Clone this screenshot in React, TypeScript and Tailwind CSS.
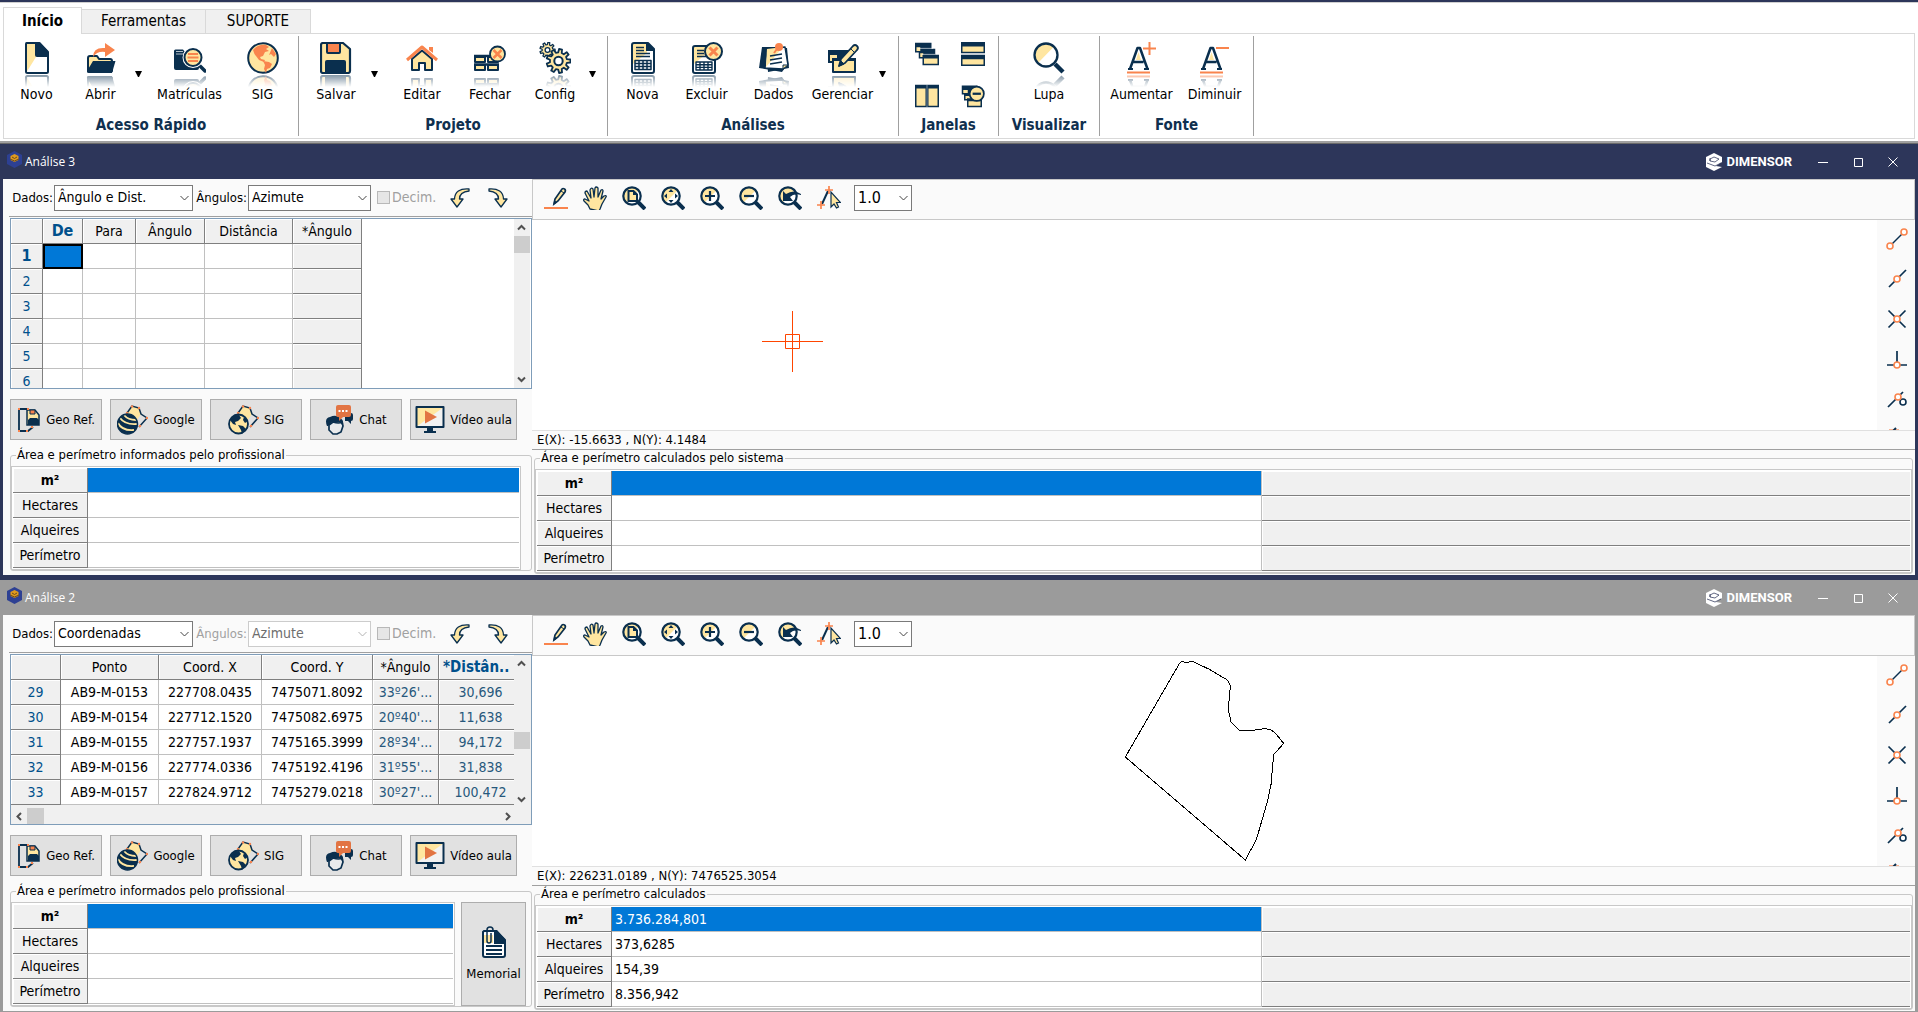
import type { ReactNode } from "react";

const N = "#0a2f4e";
const C = "#ffe6a0";
const O = "#f9844d";

/* Outline of a cog wheel with the given number of teeth. */
function cog(cx: number, cy: number, outer: number, inner: number, teeth: number) {
  const pts: string[] = [];
  const step = (2 * Math.PI) / teeth;
  for (let i = 0; i < teeth; i++) {
    const a = i * step;
    const corners: [number, number][] = [
      [inner, -0.3],
      [outer, -0.18],
      [outer, 0.18],
      [inner, 0.3],
    ];
    for (const [r, t] of corners) {
      pts.push(`${(cx + r * Math.cos(a + t * step)).toFixed(2)} ${(cy + r * Math.sin(a + t * step)).toFixed(2)}`);
    }
  }
  return `M${pts.join("L")}z`;
}

/* ---------- Ribbon icons (32 x 32) ---------- */

function Ico({ size = 32, children }: { size?: number; children: ReactNode }) {
  return (
    <svg
      viewBox="0 0 32 32"
      width={size}
      height={size}
      fill="none"
      strokeLinejoin="round"
      aria-hidden="true"
      className="block shrink-0"
    >
      {children}
    </svg>
  );
}

const icons = {
  novo: (
    <>
      <path d="M5 1h14l8 9v21H5z" fill="#fff" />
      <path d="M5 1h10v14L5 31z" fill={C} />
      <path d="M14 1h5l8 8v6H16q-2 0-2-2z" fill={N} />
      <path d="M5.500 1h13L27 10v19.500q0 1.500-1.500 1.500h-19Q5 31 5 29.500V2q0-1 .5-1z" stroke={N} strokeWidth="2" />
    </>
  ),
  abrir: (
    <>
      <path d="M3 29V16q0-2 2-2h7l2 3h11q2 0 2 2v10z" fill={C} stroke={N} strokeWidth="2" />
      <path d="M8 19h22.500L27 31H3.500q-2 0-1.500-2z" fill={N} />
      <path d="M8 15q0-10 12-9V1l10 7-10 7v-5q-8-1-12 5z" fill={O} />
    </>
  ),
  matriculas: (
    <>
      <path d="M0 26V9q0-1.500 1.500-1.500H9L11 10h14v16q0 2-2 2H2q-2 0-2-2z" fill={N} />
      <path d="M2 9.500h7M2 12h9" stroke="#fff" strokeWidth=".7" />
      <path d="m24 22 7 7" stroke={N} strokeWidth="3.500" strokeLinecap="round" />
      <circle cx="19" cy="15.500" r="8.500" fill={C} stroke="#fff" strokeWidth="4" />
      <circle cx="19" cy="15.500" r="8.500" fill={C} stroke={N} strokeWidth="2" />
      <path d="M14 12h10M13.500 15.500h11M14 19h10" stroke={O} strokeWidth="2" />
    </>
  ),
  globo: (
    <>
      <circle cx="16" cy="16" r="14.800" fill={C} stroke={N} strokeWidth="2" />
      <path d="M6 8q5-6 13-5l3 2-3 2 3 2-4 1-2 4-3 1 1 2 4 1-1 2-5-2-3-4Q7 12 6 8z" fill={O} />
      <path d="m16 19 6 1 3 2-2 4-3 1-1 4-2-4 1-4z" fill={O} />
      <path d="m25 6 4 6-2 3-3-3-2 1z" fill={O} />
    </>
  ),
  salvar: (
    <>
      <path d="M3 1h20l7 6v22q0 2-2 2H3q-2 0-2-2V3q0-2 2-2z" fill={C} stroke={N} strokeWidth="2.200" />
      <path d="M7 1h13v9q0 1-1 1H8q-1 0-1-1z" fill={O} stroke={N} strokeWidth="2" />
      <path d="M5 31V20q0-2 2-2h17q2 0 2 2v11z" fill={N} />
    </>
  ),
  editar: (
    <>
      <path d="M23 5h4v6l-4-3z" fill={O} />
      <path d="M6 17v11h7v-7h6v7h7V17L16 8.500z" fill={C} stroke={N} strokeWidth="2" />
      <path d="M1 18 16 5l15 13" stroke={O} strokeWidth="3" />
    </>
  ),
  fechar: (
    <>
      <g fill={C} stroke={N} strokeWidth="2">
        <path d="M1 15h10v5H1zM1 23h10v5H1zM14 15h10v5H14zM14 23h10v5H14z" />
      </g>
      <path d="M0 14h25M0 22.500h25" stroke={N} strokeWidth="2.500" />
      <circle cx="23.500" cy="12" r="7.500" fill={C} stroke={N} strokeWidth="1.800" />
      <path d="m19.500 8 8 8m0-8-8 8" stroke={O} strokeWidth="2.500" />
    </>
  ),
  config: (
    <>
      <path d={cog(8.5, 8, 7.6, 5.4, 9)} fill={C} stroke={N} strokeWidth="1.300" />
      <circle cx="8.500" cy="8" r="2.400" fill="#fff" stroke={N} strokeWidth="1.300" />
      <path d={cog(19.500, 19, 12, 8.600, 9)} fill={C} stroke={N} strokeWidth="1.800" />
      <circle cx="19.500" cy="19" r="4.200" fill="#fff" stroke={N} strokeWidth="2" />
    </>
  ),
  nova: (
    <>
      <path d="M7 1h14l6 6v22q0 2-2 2H7q-2 0-2-2V3q0-2 2-2z" fill="#fff" />
      <path d="M6 1h14v10L6 22z" fill={C} />
      <path d="M19 1h2l6 6v2h-8z" fill={N} />
      <path d="M9 5.500h8M9 8.500h8M9 11.500h14M9 14.500h14M8 18.500h16v9H8zM8 21.500h16M8 24.500h16M12 18v10M16 18v10M20 18v10" stroke={N} strokeWidth="1.500" />
      <path d="M7 1h14l6 6v22q0 2-2 2H7q-2 0-2-2V3q0-2 2-2z" stroke={N} strokeWidth="2" />
    </>
  ),
  excluir: (
    <>
      <path d="M4 4h17l3 3v22q0 2-2 2H4q-2 0-2-2V6q0-2 2-2z" fill="#fff" />
      <path d="M3 4h12v8L3 22z" fill={C} />
      <path d="M6 8.500h7M6 11.500h7M6 14.500h9M5 20h16v8H5zM5 22.700h16M5 25.400h16M9 20v8M13 20v8M17 20v8" stroke={N} strokeWidth="1.400" />
      <path d="M4 4h17l3 3v22q0 2-2 2H4q-2 0-2-2V6q0-2 2-2z" stroke={N} strokeWidth="2" />
      <circle cx="22.500" cy="9.500" r="8.500" fill={C} stroke={N} strokeWidth="2" />
      <path d="m18.500 5.500 8 8m0-8-8 8" stroke={O} strokeWidth="3" />
    </>
  ),
  dados: (
    <>
      <path d="M4 5h20l5 18-5 7L1 26z" fill={N} />
      <path d="M8 6h21l2 20-21 4z" fill={N} />
      <path d="m9 7 18-2 3 18-5 4-18-1z" fill="#fff" stroke={N} strokeWidth="1.500" />
      <path d="m9 7 16-2L8 25z" fill={C} />
      <path d="M30 23h-5v4z" fill={C} stroke={N} />
      <path d="m12 14 12-2M12 18l12-2M12 22l12-2" stroke={N} strokeWidth="1.700" />
      <circle cx="21" cy="5" r="4" fill={O} />
      <path d="m19 7-3 4" stroke={O} strokeWidth="2" />
    </>
  ),
  gerenciar: (
    <>
      <path d="M1 8h20v13H1z" fill={N} />
      <path d="M3 13h7v6H3z" fill={C} />
      <path d="M6 17h22v13H6z" fill={C} stroke={N} strokeWidth="2" />
      <path d="M5 16h24v3H5z" fill={N} />
      <path d="m12 24 2-7L26 4q2-2 4 0t0 4L18 21z" fill={C} stroke={N} strokeWidth="1.800" />
      <path d="m12 24 2-5 3 3zM24 7l4 4" fill={N} stroke={N} />
    </>
  ),
  lupa: (
    <>
      <path d="m22 22 8 8" stroke={N} strokeWidth="4.500" />
      <circle cx="13" cy="13" r="11.500" fill="#fff" />
      <path d="M21 4.500A11.500 11.500 0 1 0 5 21z" fill={C} />
      <circle cx="13" cy="13" r="11.500" stroke={N} strokeWidth="2.300" />
    </>
  ),
  aumentar: (
    <>
      <path d="m12.500 10 2.500 8h-5z" fill={C} />
      <path d="m4 27 7.500-21h2.500l7.500 21M7.500 20h10" stroke={N} strokeWidth="2.500" />
      <path d="M2 27h5M18 27h5" stroke={N} strokeWidth="2" />
      <path d="M1 30.500h23M17 6.500h13M23.500 0v13" stroke={O} strokeWidth="2" />
    </>
  ),
  diminuir: (
    <>
      <path d="m12.500 10 2.500 8h-5z" fill={C} />
      <path d="m4 27 7.500-21h2.500l7.500 21M7.500 20h10" stroke={N} strokeWidth="2.500" />
      <path d="M2 27h5M18 27h5" stroke={N} strokeWidth="2" />
      <path d="M1 30.500h23M17 6h13" stroke={O} strokeWidth="2" />
    </>
  ),
  cascata: (
    <>
      <path d="M0 1h22v13H0zM5 9h22v13H5z" fill={N} />
      <path d="M2 7h5v5H2zM7 15h4v5H7z" fill={C} />
      <path d="M10 17h22v14H10z" fill={N} />
      <path d="M12 22h18v7H12z" fill={C} />
      <path d="M4 8.500h20M9 16.500h18" stroke="#fff" strokeWidth=".8" />
    </>
  ),
  horizontal: (
    <>
      <path d="M0 0h32v15H0zM0 17h32v15H0z" fill={N} />
      <path d="M2 6h28v7H2zM2 23h28v7H2z" fill={C} />
    </>
  ),
  vertical: (
    <>
      <path d="M0 1h32v30H0z" fill={N} />
      <path d="M2 6h12v23H2zM18 6h12v23H18z" fill={C} />
      <path d="M16 1v30" stroke="#fff" strokeWidth=".6" />
    </>
  ),
  fecharJanelas: (
    <>
      <path d="M1 2h21v12H1zM4 10h20v12H4z" fill={N} />
      <path d="M3 8h6v4H3zM6 16h7v4H6z" fill={C} />
      <path d="M8 19h20v12H8z" fill={N} />
      <path d="M10 23h16v6H10z" fill={C} />
      <circle cx="21" cy="13" r="9.500" fill={C} stroke={N} strokeWidth="2.300" />
      <path d="M15.500 13h11" stroke={N} strokeWidth="3" />
    </>
  ),
};

type IconName = keyof typeof icons;

function Reflected({ name }: { name: IconName }) {
  return (
    <span className="block">
      <Ico>{icons[name]}</Ico>
      <span className="mt-px block h-3 overflow-hidden opacity-50 [mask-image:linear-gradient(to_bottom,black,transparent)]">
        <span className="block -scale-y-100">
          <Ico>{icons[name]}</Ico>
        </span>
      </span>
    </span>
  );
}

function Tool({ name, label, width }: { name: IconName; label: string; width: string }) {
  return (
    <button type="button" className={`${width} flex flex-col items-center`}>
      <Reflected name={name} />
      <span className="-mt-px whitespace-nowrap text-[14px] leading-4 text-black">{label}</span>
    </button>
  );
}

function More({ label }: { label: string }) {
  return (
    <button type="button" aria-label={label} className="flex w-3 justify-center pt-[29px]">
      <svg width="7" height="6" viewBox="0 0 7 6" aria-hidden="true">
        <path d="M0 0h7L4 6H3z" fill="#000" />
      </svg>
    </button>
  );
}

function Group({ title, width, children }: { title: string; width: string; children: ReactNode }) {
  return (
    <section className={`${width} flex h-[100px] shrink-0 flex-col justify-between border-r border-[#a0a0a0] pt-[6px]`}>
      <div className="flex justify-center">{children}</div>
      <h2 className="pb-[2px] text-center text-[15px] font-bold leading-[18px] text-[#10304f]">{title}</h2>
    </section>
  );
}

function Ribbon() {
  return (
    <header className="bg-white">
      <div className="h-[2px] bg-[#2d365a]" />
      <nav className="flex items-end border-t border-[#d0d0d0] pl-[3px] pt-[4px]">
        <button type="button" className="-mb-px h-[27px] w-[79px] border border-b-0 border-[#d9d9d9] bg-white text-[15px] font-bold leading-6 text-black">
          Início
        </button>
        <button type="button" className="h-6 w-[123px] border-t border-[#d9d9d9] bg-[#f0f0f0] text-[15px] text-black">
          Ferramentas
        </button>
        <button type="button" className="h-6 w-[106px] border border-b-0 border-[#d9d9d9] bg-[#f0f0f0] text-[15px] text-black">
          SUPORTE
        </button>
      </nav>
      <div className="mx-[3px] flex border border-[#d9d9d9] pb-[2px] pt-[2px]">
        <Group title="Acesso Rápido" width="w-[295px]">
          <Tool name="novo" label="Novo" width="w-16" />
          <Tool name="abrir" label="Abrir" width="w-16" />
          <More label="Mais opções de Abrir" />
          <Tool name="matriculas" label="Matrículas" width="w-[90px]" />
          <Tool name="globo" label="SIG" width="w-14" />
          <span className="w-[7px]" />
        </Group>
        <Group title="Projeto" width="w-[309px]">
          <Tool name="salvar" label="Salvar" width="w-16" />
          <More label="Mais opções de Salvar" />
          <span className="w-2" />
          <Tool name="editar" label="Editar" width="w-[68px]" />
          <Tool name="fechar" label="Fechar" width="w-[68px]" />
          <Tool name="config" label="Config" width="w-[62px]" />
          <More label="Mais opções de Config" />
          <span className="w-1" />
        </Group>
        <Group title="Análises" width="w-[291px]">
          <Tool name="nova" label="Nova" width="w-16" />
          <Tool name="excluir" label="Excluir" width="w-16" />
          <Tool name="dados" label="Dados" width="w-[70px]" />
          <Tool name="gerenciar" label="Gerenciar" width="w-[68px]" />
          <More label="Mais opções de Gerenciar" />
          <span className="w-[7px]" />
        </Group>
        <Group title="Janelas" width="w-[100px]">
          <div className="grid grid-cols-2 gap-x-[22px] gap-y-[18px] pl-[2px]">
            {(["cascata", "horizontal", "vertical", "fecharJanelas"] as IconName[]).map((n) => (
              <button key={n} type="button" aria-label={n}>
                <Ico size={24}>{icons[n]}</Ico>
              </button>
            ))}
          </div>
        </Group>
        <Group title="Visualizar" width="w-[101px]">
          <Tool name="lupa" label="Lupa" width="w-16" />
        </Group>
        <Group title="Fonte" width="w-[154px]">
          <Tool name="aumentar" label="Aumentar" width="w-[76px]" />
          <Tool name="diminuir" label="Diminuir" width="w-[70px]" />
        </Group>
      </div>
      <div className="mt-[2px] h-[3px] border-b border-[#696969] bg-[#a0a0a0]" />
    </header>
  );
}

/* ---------- Window pieces ---------- */

function Cube() {
  return (
    <svg width="15" height="17" viewBox="0 0 15 17" aria-hidden="true">
      <path d="M7.500 0 15 4v9l-7.500 4L0 13V4z" fill="#2d4093" />
      <path d="m7.500 3 4 2v4l-4 2-4-2V5z" fill="#e09a1c" />
      <path d="m3 8 4.500 2L12 8M5 6l2.500 1.500L10 6" stroke="#6b4a1e" fill="none" />
    </svg>
  );
}

function Brand() {
  return (
    <span className="flex items-center gap-[5px] font-['Roboto'] text-[13px] font-bold text-white">
      <svg width="16" height="18" viewBox="0 0 16 18" aria-hidden="true">
        <path d="m8 0 8 4v5l-6 4 6 1-8 4-8-4V4z" fill="currentColor" />
        <path d="m4 6 4-2 5 2-4 3-5-1zM1 10l8 3 6-3M4 5v3" fill="none" stroke="#2d365a" strokeOpacity=".75" />
      </svg>
      DIMENSOR
    </span>
  );
}

function TitleBar({ title }: { title: string }) {
  return (
    <div className="flex h-[35px] items-center pl-[7px] pr-[19px] text-white">
      <span className="-mt-1">
        <Cube />
      </span>
      <h1 className="ml-[3px] flex-1 font-['Open_Sans'] text-[12px] leading-4">{title}</h1>
      <Brand />
      <div className="ml-[25px] flex gap-[23px]">
        <button type="button" aria-label="Minimizar">
          <svg width="12" height="12" viewBox="0 0 12 12"><path d="M1 6.500h10" stroke="#fff" /></svg>
        </button>
        <button type="button" aria-label="Maximizar">
          <svg width="12" height="12" viewBox="0 0 12 12"><path d="M2.500 2.500h8v8h-8z" fill="none" stroke="#fff" /></svg>
        </button>
        <button type="button" aria-label="Fechar janela">
          <svg width="12" height="12" viewBox="0 0 12 12"><path d="m1.500 1.500 9 9m0-9-9 9" stroke="#fff" /></svg>
        </button>
      </div>
    </div>
  );
}

function Picker({ label, value, disabled = false, size }: { label?: string; value: string; disabled?: boolean; size: string }) {
  return (
    <>
      <select
        aria-label={label}
        disabled={disabled}
        defaultValue={value}
        className={`${size} h-[26px] w-full appearance-none border bg-white pl-[3px] opacity-100 ${disabled ? "border-[#cccccc] text-[#6d6d6d]" : "border-[#7a7a7a] text-black"}`}
      >
        <option>{value}</option>
      </select>
      <svg className={`pointer-events-none absolute right-1 top-[10px] ${disabled ? "opacity-40" : ""}`} width="9" height="7" viewBox="0 0 9 7" aria-hidden="true">
        <path d="M.5 1 4.500 5l4-4" fill="none" stroke="#444" />
      </svg>
    </>
  );
}

function Combo({ label, value, width, disabled = false }: { label: string; value: string; width: string; disabled?: boolean }) {
  return (
    <label className={`flex shrink-0 items-center text-[13px] ${disabled ? "text-[#a0a0a0]" : "text-black"}`}>
      <span className="whitespace-nowrap pr-px">{label}</span>
      <span className={`${width} relative block shrink-0`}>
        <Picker value={value} disabled={disabled} size="text-[14px]" />
      </span>
    </label>
  );
}

function CurvedArrow({ flip = false }: { flip?: boolean }) {
  return (
    <svg width="20" height="20" viewBox="0 0 20 20" className={flip ? "-scale-x-100" : ""} aria-hidden="true">
      <path d="M19 1Q5 0 4.500 11H1l6 8 6-8H9.500Q9.500 4 19 3z" fill={C} stroke={N} strokeWidth="1.300" strokeLinejoin="round" />
    </svg>
  );
}

function DataBar({ source, locked = false }: { source: string; locked?: boolean }) {
  return (
    <div className="ml-[6px] flex h-[38px] items-center border-b border-[#a0a0a0] pl-[3px]">
      <div className="flex w-[181px] justify-end">
        <Combo label="Dados:" value={source} width="w-[139px]" />
      </div>
      <div className="flex w-[178px] justify-end">
        <Combo label="Ângulos:" value="Azimute" width="w-[123px]" disabled={locked} />
      </div>
      <label className="ml-[6px] flex items-center gap-[2px] text-[14px] text-[#a0a0a0]">
        <input type="checkbox" disabled className="size-[13px] appearance-none border border-[#b8b8b8] bg-[#e6e6e6]" />
        Decim.
      </label>
      <button type="button" aria-label="Desfazer" className="ml-[14px]"><CurvedArrow /></button>
      <button type="button" aria-label="Refazer" className="ml-[18px]"><CurvedArrow flip /></button>
    </div>
  );
}

function Chevron({ d }: { d: string }) {
  return (
    <svg width="16" height="17" viewBox="0 0 16 17" fill="none" stroke="#505050" strokeWidth="2" className="block" aria-hidden="true">
      <path d={d} />
    </svg>
  );
}

function VScroll({ offset }: { offset: string }) {
  return (
    <div className="mr-px flex w-4 shrink-0 flex-col justify-between bg-[#f0f0f0]">
      <button type="button" aria-label="Rolar para cima"><Chevron d="m4 10.500 3.500-3.500 3.500 3.500" /></button>
      <div className="flex-1"><div className={`${offset} h-[17px] bg-[#cdcdcd]`} /></div>
      <button type="button" aria-label="Rolar para baixo"><Chevron d="m4 6.500 3.500 3.500L11 6.500" /></button>
    </div>
  );
}

const gray = "border-b border-r border-[#7f7f7f] bg-[#f0f0f0] shadow-[inset_1px_1px_0_#fff]";
const cell = "border-b border-r border-[#c0c0c0] bg-white";
const grid = "table-fixed border-separate border-spacing-0 text-center text-[14px] leading-5";

function AngleGrid() {
  return (
    <div className="flex min-h-[171px] flex-1 basis-0 border border-[#7f9db9] bg-white">
      <div className="min-h-0 flex-1 basis-0 overflow-hidden">
        <div className="h-[169px]">
          <table className={grid + " w-[351px] text-black"}>
            <colgroup>
              <col className="w-8" /><col className="w-10" /><col className="w-[53px]" />
              <col className="w-[69px]" /><col className="w-[88px]" /><col className="w-[69px]" />
            </colgroup>
            <thead>
              <tr className="h-[25px]">
                <th className={gray} />
                <th className={gray + " p-0 text-[16px] font-bold text-[#00508c]"}>De</th>
                {["Para", "Ângulo", "Distância", "*Ângulo"].map((h) => (
                  <th key={h} className={gray + " p-0 font-normal"}>{h}</th>
                ))}
              </tr>
            </thead>
            <tbody>
              {[1, 2, 3, 4, 5, 6].map((n) => (
                <tr key={n} className="h-[25px]">
                  <th className={gray + (n === 1 ? " text-[16px] font-bold" : " font-normal") + " p-0 text-[#00508c]"}>{n}</th>
                  <td className={n === 1 ? "border-2 border-black bg-[#0078d7]" : cell} />
                  <td className={cell} /><td className={cell} /><td className={cell} />
                  <td className={gray} />
                </tr>
              ))}
            </tbody>
          </table>
        </div>
      </div>
      <VScroll offset="" />
    </div>
  );
}

const points = [
  ["29", "AB9-M-0153", "227708.0435", "7475071.8092", "33º26'...", "30,696"],
  ["30", "AB9-M-0154", "227712.1520", "7475082.6975", "20º40'...", "11,638"],
  ["31", "AB9-M-0155", "227757.1937", "7475165.3999", "28º34'...", "94,172"],
  ["32", "AB9-M-0156", "227774.0336", "7475192.4196", "31º55'...", "31,838"],
  ["33", "AB9-M-0157", "227824.9712", "7475279.0218", "30º27'...", "100,472"],
];

function PointGrid() {
  return (
    <div className="flex min-h-[171px] flex-1 basis-0 flex-col border border-[#7f9db9] bg-[#f0f0f0]">
      <div className="flex min-h-0 flex-1 basis-0">
        <div className="flex-1 overflow-hidden">
          <table className={grid + " w-full whitespace-nowrap text-black"}>
            <colgroup>
              <col className="w-[50px]" /><col className="w-[98px]" /><col className="w-[103px]" />
              <col className="w-[111px]" /><col className="w-[66px]" /><col />
            </colgroup>
            <thead>
              <tr className="h-[25px]">
                <th className={gray} />
                {["Ponto", "Coord. X", "Coord. Y", "*Ângulo"].map((h) => (
                  <th key={h} className={gray + " p-0 font-normal"}>{h}</th>
                ))}
                <th className={gray + " overflow-hidden border-r-0 p-0 text-left text-[15px] font-bold text-[#00508c]"}>
                  <span className="pl-1">*Distân..</span>
                </th>
              </tr>
            </thead>
            <tbody>
              {points.map((p) => (
                <tr key={p[0]} className="h-[25px]">
                  <th className={gray + " p-0 font-normal text-[#00508c]"}>{p[0]}</th>
                  <td className={cell + " p-0"}>{p[1]}</td>
                  <td className={cell + " p-0"}>{p[2]}</td>
                  <td className={cell + " p-0"}>{p[3]}</td>
                  <td className={gray + " p-0 text-[#27587c]"}>{p[4]}</td>
                  <td className={gray + " border-r-0 p-0 pl-2 text-[#27587c]"}>{p[5]}</td>
                </tr>
              ))}
            </tbody>
          </table>
        </div>
        <VScroll offset="mt-[60px]" />
      </div>
      <div className="flex h-4 items-center pr-4">
        <button type="button" aria-label="Rolar para a esquerda"><Chevron d="M10 5 6.500 8.500 10 12" /></button>
        <div className="flex-1"><div className="h-4 w-[17px] bg-[#cdcdcd]" /></div>
        <button type="button" aria-label="Rolar para a direita"><Chevron d="M7 5l3.500 3.500L7 12" /></button>
      </div>
    </div>
  );
}

/* ---------- Action buttons ---------- */

const parcel = (
  <>
    <path d="M10 8 15 1l7 2 2 6-8 12-6-4z" fill={C} />
    <path d="M10 8 15 1l7 2 2 6 6 4-8 9" stroke={N} strokeWidth="1.500" />
    <g fill={O}>
      <circle cx="10" cy="8" r="1.200" /><circle cx="15" cy="1.500" r="1.200" /><circle cx="22" cy="3" r="1.200" />
      <circle cx="30" cy="13" r="1.200" /><circle cx="23" cy="21" r="1.200" />
    </g>
  </>
);

const actions: { label: string; width: string; icon: ReactNode }[] = [
  {
    label: "Geo Ref.",
    width: "w-[92px]",
    icon: (
      <svg width="24" height="26" viewBox="0 0 24 26" fill="none" aria-hidden="true">
        <path d="M11 2H2v22h9l5-4" stroke={N} strokeWidth="1.800" />
        <path d="M10 3h8l4 5v10H10z" fill={C} stroke={N} strokeWidth="1.500" />
        <path d="M11 18v-5l2-2h7l2 2v5z" fill={N} />
        <path d="M13 3h5v4h-5z" fill={O} stroke={N} />
        <path d="M1 1h2v2H1zM10 1h2v2h-2zM1 23h2v2H1zM9 23h2v2H9zM14 19h2v2h-2z" fill={O} />
      </svg>
    ),
  },
  {
    label: "Google",
    width: "w-[92px]",
    icon: (
      <svg width="31" height="30" viewBox="0 0 31 30" fill="none" aria-hidden="true">
        {parcel}
        <circle cx="10.500" cy="19" r="10" fill={N} />
        <path d="M3 13q5 7 17 6M1 18q4 8 16 7M7 10q4 5 12 5" stroke={C} strokeWidth="1.800" />
        <circle cx="10.500" cy="19" r="10" stroke={N} strokeWidth="1.500" />
      </svg>
    ),
  },
  {
    label: "SIG",
    width: "w-[92px]",
    icon: (
      <svg width="31" height="30" viewBox="0 0 31 30" fill="none" aria-hidden="true">
        {parcel}
        <circle cx="10.500" cy="19" r="9.500" fill={C} stroke={N} strokeWidth="1.800" />
        <path d="M2 15q3-5 9-5l2 3-3 3-3 1 1 3-3-1zM10 20l5 1 3 3-4 5-1-4zM16 12l4 4-3 2-2-3z" fill={N} />
      </svg>
    ),
  },
  {
    label: "Chat",
    width: "w-[92px]",
    icon: (
      <svg width="29" height="30" viewBox="0 0 29 30" fill="none" aria-hidden="true">
        <path d="M20 8h6q2 0 2 2v4q0 2-2 2v3l-3-3h-3z" fill={N} />
        <path d="m4 20 4-3q6 2 9 0l1 4-2 6-4 2H8l-4-4z" fill="#e8eaec" stroke={N} strokeWidth="1.700" />
        <path d="M2 21q-3-8 3-9 6-3 10 1 4 2 3 7h-1l-2-3q-4 1-8 0l-4 4z" fill={N} />
        <path d="M13 0h11q2 0 2 2v8q0 2-2 2h-6l-4 4v-4h-1q-2 0-2-2V2q0-2 2-2z" fill="#e27443" />
        <path d="M13.500 6h2M17 6h2M20.500 6h2" stroke="#fff" strokeWidth="2" />
      </svg>
    ),
  },
  {
    label: "Vídeo aula",
    width: "w-[107px]",
    icon: (
      <svg width="30" height="27" viewBox="0 0 30 27" fill="none" aria-hidden="true">
        <path d="M1 1h28v20H1z" fill="#f2f2f2" />
        <path d="M1 1h28L1 21z" fill={C} />
        <path d="M1.500 1h27v20h-27z" stroke={N} strokeWidth="2" strokeLinejoin="round" />
        <path d="M10 4.500v13L22 11z" fill="#e27443" />
        <path d="M12 22h6v3h3v2H9v-2h3z" fill={N} />
      </svg>
    ),
  },
];

function Actions() {
  return (
    <div className="flex gap-2 pb-[7px] pt-[10px]">
      {actions.map((a) => (
        <button key={a.label} type="button" className={`${a.width} flex h-[41px] items-center justify-center gap-[5px] whitespace-nowrap border border-[#adadad] bg-[#e1e1e1] text-[13px] text-black`}>
          {a.icon}
          {a.label}
        </button>
      ))}
    </div>
  );
}

/* ---------- Area tables ---------- */

function AreaTable({ values, split = false }: { values: string[]; split?: boolean }) {
  return (
    <div className="flex-1 border border-[#c8c8c8] bg-white p-[1px]">
      <table className="w-full table-fixed border-separate border-spacing-0 text-[14px] leading-5 text-black">
        <colgroup>
          <col className="w-[75px]" />
          <col className={split ? "w-[650px]" : ""} />
          {split && <col />}
        </colgroup>
        <tbody>
          {["m²", "Hectares", "Alqueires", "Perímetro"].map((h, i) => (
            <tr key={h} className="h-[25px]">
              <th className={gray + " p-0 " + (i === 0 ? "font-bold" : "font-normal")}>{h}</th>
              <td className={"border-b border-[#c0c0c0] p-0 pl-[3px] " + (split ? "border-r " : "") + (i === 0 ? "bg-[#0078d7] text-white" : "bg-white")}>
                {values[i]}
              </td>
              {split && <td className={gray + " border-r-0"} />}
            </tr>
          ))}
        </tbody>
      </table>
    </div>
  );
}

function AreaBox({ legend, children }: { legend: string; children: ReactNode }) {
  return (
    <fieldset className="min-w-0 rounded-[3px] border border-[#c8c8c8]">
      <legend className="ml-[5px] px-px text-[13px] leading-4 text-black">{legend}</legend>
      <div className="flex pt-[3px]">{children}</div>
    </fieldset>
  );
}

/* ---------- Drawing tools (24 x 24) ---------- */

function Lens({ children }: { children: ReactNode }) {
  return (
    <>
      <path d="m16 16 7 7" stroke={N} strokeWidth="4" />
      <circle cx="10" cy="10" r="8.500" fill="#fff" />
      <path d="M17 4A9 9 0 1 0 4 17z" fill={C} />
      <circle cx="10" cy="10" r="8.700" stroke={N} strokeWidth="2.200" />
      {children}
    </>
  );
}

const drawTools: [string, ReactNode][] = [
  ["Desenhar", (
    <>
      <path d="m10 18 1-5 7-10q1-1 2.500 0t.5 3l-7 9z" fill={C} stroke={N} strokeWidth="1.700" />
      <path d="m10 18 .5-3 2 1.500zM17 5l3 2" fill={N} stroke={N} />
      <path d="M0 22h24" stroke={O} strokeWidth="2" />
    </>
  )],
  ["Mover", (
    <path d="M7 23 5 19 1 15q-1-2 1-2l4 2-4-8q0-2 2-2l4 7-1-8q1-3 3-1l1 8 1-9q1-2 3 0v9l3-7q2-1 2 1l-2 8 3-3q3-1 2 1l-4 7-2 5-1 2z" fill={C} stroke={N} strokeWidth="1.300" strokeLinejoin="round" />
  )],
  ["Zoom página", <Lens><path d="M6.500 5h5L15 8.500V15H6.500z" stroke={N} strokeWidth="2" fill={C} /><path d="M11 4.500V9h4.500z" fill={N} /></Lens>],
  ["Zoom tudo", <Lens><path d="m10 3 2.500 3h-5zM10 17l2.500-3h-5zM3 10l3-2.500v5zM17 10l-3-2.500v5z" fill={N} /></Lens>],
  ["Aproximar", <Lens><path d="M5 10h10M10 5v10" stroke={N} strokeWidth="2.200" /></Lens>],
  ["Afastar", <Lens><path d="M5 10h10" stroke={N} strokeWidth="2.200" /></Lens>],
  ["Zoom anterior", <Lens><path d="M5 15V5l3 3q8-5 15 0v1q-7-2-11 2l3 4z" fill={N} /></Lens>],
  ["Selecionar", (
    <>
      <path d="m5 18 6-13" stroke={N} strokeWidth="2" />
      <path d="M8 4h8M12 0v8M0 19h8M4 15v8" stroke={O} strokeWidth="1.700" />
      <path d="M14 6v15l3-3 2.500 4 2-1-2-4.500h4z" fill={C} stroke={N} strokeWidth="1.200" />
    </>
  )],
];

const node = (x: number, y: number, c = O) => <circle cx={x} cy={y} r="3" fill="#fff" stroke={c} strokeWidth="1.600" />;

const snaps: [string, ReactNode][] = [
  ["Extremidade", <><path d="m5 19 14-14" stroke={N} strokeWidth="1.500" />{node(5, 19)}{node(19, 5)}</>],
  ["Ponto médio", <><path d="m4 20 17-17" stroke={N} strokeWidth="1.700" />{node(12, 12)}</>],
  ["Interseção", <><path d="m3.500 3.500 17 17m0-17-17 17" stroke={N} strokeWidth="1.700" />{node(12, 12)}</>],
  ["Perpendicular", <><path d="M2 18h20M12 4v14" stroke={N} strokeWidth="1.700" />{node(12, 18)}</>],
  ["Tangente", <><path d="M3 20 18 5" stroke={N} strokeWidth="1.700" />{node(18, 15, N)}{node(13, 10)}</>],
  ["Mais próximo", <><path d="M4 3h10" stroke={O} strokeWidth="1.200" /><path d="m8 4 3-3" stroke={N} strokeWidth="2" /></>],
];

function Icon24({ children }: { children: ReactNode }) {
  return <svg width="24" height="24" viewBox="0 0 24 24" fill="none" className="block" aria-hidden="true">{children}</svg>;
}

function Viewer({ coords, legend, values, children }: { coords: string; legend: string; values: string[]; children: ReactNode }) {
  return (
    <div className="flex min-w-0 flex-1 flex-col">
      <div className="flex h-[41px] items-center gap-[15px] border border-[#c8c8c8] pb-1 pl-[11px]">
        {drawTools.map(([name, art]) => (
          <button key={name} type="button" aria-label={name}><Icon24>{art}</Icon24></button>
        ))}
        <div className="relative -ml-[2px] w-[58px]">
          <Picker label="Escala" value="1.0" size="text-[16px]" />
        </div>
      </div>
      <div className="flex min-h-[210px] flex-1 basis-0 bg-white">
        <div className="relative flex-1 overflow-hidden">{children}</div>
        <div className="w-[38px] overflow-hidden bg-[#fafafa]">
          <div className="flex h-[210px] flex-col items-center gap-4 overflow-hidden pl-[2px] pt-[7px]">
            {snaps.map(([name, art]) => (
              <button key={name} type="button" aria-label={name}><Icon24>{art}</Icon24></button>
            ))}
          </div>
        </div>
      </div>
      <p className="h-5 border-b border-t border-b-[#a0a0a0] border-t-[#e0e0e0] pl-[5px] text-[13px] leading-[18px] text-black">{coords}</p>
      <div className="px-[2px] pb-px">
        <AreaBox legend={legend}>
          <AreaTable values={values} split />
        </AreaBox>
      </div>
    </div>
  );
}

function Panel({ frame, title, left, right }: { frame: string; title: string; left: ReactNode; right: ReactNode }) {
  return (
    <article className={`${frame} flex flex-1 flex-col`}>
      <TitleBar title={title} />
      <div className="mx-[3px] flex flex-1 bg-[#fafafa]">
        <div className="flex w-[529px] shrink-0 flex-col">{left}</div>
        {right}
      </div>
    </article>
  );
}

export default function App() {
  return (
    <main className="flex min-h-screen flex-col bg-white font-['DejaVu_Sans_Condensed','DejaVu_Sans',sans-serif]">
      <Ribbon />
      <Panel
        frame="bg-[#2d365a] pb-[5px]"
        title="Análise 3"
        left={
          <>
            <DataBar source="Ângulo e Dist." />
            <div className="flex flex-1 flex-col pb-1 pl-[7px] pt-px">
              <AngleGrid />
              <Actions />
              <AreaBox legend="Área e perímetro informados pelo profissional">
                <AreaTable values={[]} />
                <span className="w-[10px]" />
              </AreaBox>
            </div>
          </>
        }
        right={
          <Viewer coords="E(X): -15.6633 , N(Y): 4.1484" legend="Área e perímetro calculados pelo sistema" values={[]}>
            <svg className="absolute left-[230px] top-[91px]" width="61" height="61" viewBox="0 0 61 61" fill="none" stroke="#ff4500" aria-label="Cursor">
              <path d="M30.500 0v61M0 30.500h61M23.500 23.500h14v14h-14z" />
            </svg>
          </Viewer>
        }
      />
      <Panel
        frame="bg-[#9b9b9b] pb-px"
        title="Análise 2"
        left={
          <>
            <DataBar source="Coordenadas" locked />
            <div className="flex flex-1 flex-col pb-1 pl-[7px] pt-px">
              <PointGrid />
              <Actions />
              <AreaBox legend="Área e perímetro informados pelo profissional">
                <AreaTable values={[]} />
                <button type="button" className="ml-[6px] mr-[5px] flex w-[65px] flex-col items-center justify-center gap-2 border border-[#adadad] bg-[#e1e1e1] text-[13px] leading-4 text-black">
                  <svg width="24" height="32" viewBox="0 0 24 32" fill="none" aria-hidden="true">
                    <path d="M2 5h12l9 9v15q0 2-2 2H3q-2 0-2-2V6z" fill="#fff" stroke={N} strokeWidth="2" />
                    <path d="M12 4h3l8 9v5H12z" fill={N} />
                    <path d="M4 20h16M4 24h16M4 28h16" stroke={N} strokeWidth="2" />
                    <path d="M2 9h9v8H2z" fill={C} />
                    <path d="M9 7v8q0 2-2 2t-2-2V4q0-3 3-3t3 3" stroke={N} strokeWidth="1.500" />
                  </svg>
                  Memorial
                </button>
              </AreaBox>
            </div>
          </>
        }
        right={
          <Viewer coords="E(X): 226231.0189 , N(Y): 7476525.3054" legend="Área e perímetro calculados" values={["3.736.284,801", "373,6285", "154,39", "8.356,942"]}>
            <svg className="absolute left-[568px] top-0" width="220" height="210" viewBox="0 48 660 630" fill="none" shapeRendering="crispEdges" aria-label="Polígono do imóvel">
              <path d="M76 351 238 71l7-6 12 2 23-2 50 24 52 31 9 18-6 70 8 38 24 24 14 3 20-1 43-6 15 2 15 9 27 33-30 34-8 90-10 48-34 117-33 61z" stroke="#000" strokeWidth="3" />
            </svg>
          </Viewer>
        }
      />
    </main>
  );
}
